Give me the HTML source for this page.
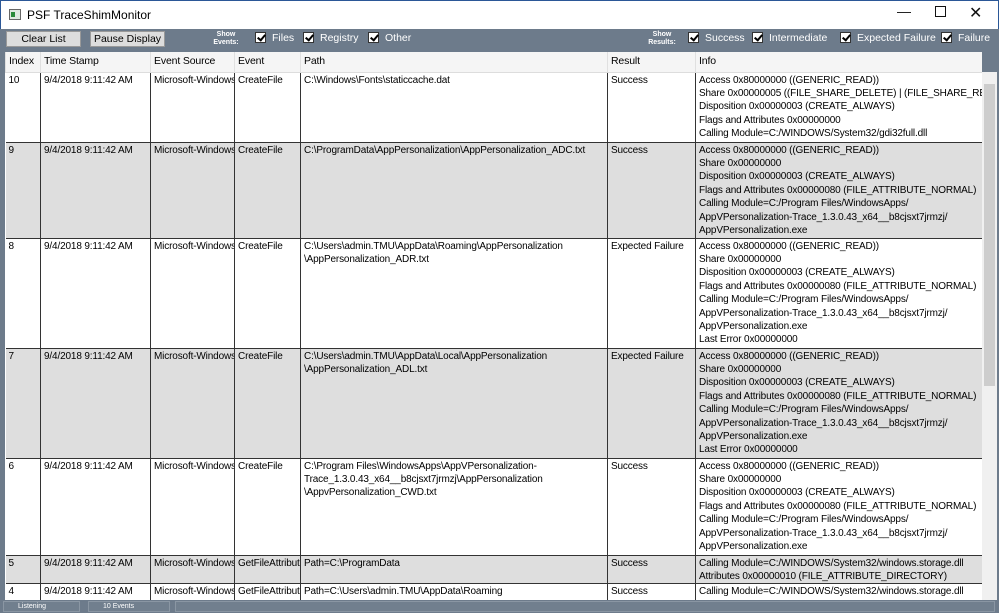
<!DOCTYPE html>
<html><head><meta charset="utf-8"><style>
*{margin:0;padding:0;box-sizing:border-box}
body{width:999px;height:613px;overflow:hidden;background:#6d7b8b;font-family:"Liberation Sans",sans-serif;font-size:10px;color:#000;position:relative}
#title{position:absolute;left:0;top:0;width:999px;height:29px;background:#fff;border:1px solid #2b5797;border-bottom:none}
#title .t{position:absolute;left:26px;top:7px;font-size:12px}
#title .ic{position:absolute;left:8px;top:8px;width:12px;height:11px;border:1px solid #666;background:#dfe8e0}
#title .ic:after{content:"";position:absolute;left:1px;top:2px;width:4px;height:5px;background:#2a8a3a}
.wb{position:absolute;top:4px;font-size:14px;color:#111}
.btn{position:absolute;top:31px;height:16px;background:#ddd;border:1px solid #999;font-size:10.5px;text-align:center;line-height:14px}
.lbl{position:absolute;top:31px;color:#fff;font-size:7px;font-weight:bold;line-height:8px;text-align:center;width:30px}
.cb{position:absolute;top:32px;color:#fff;font-size:10.5px;line-height:13px;white-space:nowrap}
.cb i{display:inline-block;width:11px;height:11px;background:#fff;border:1px solid #333;vertical-align:-2px;margin-right:6px;position:relative}
.cb i:after{content:"";position:absolute;left:3px;top:0px;width:3px;height:6px;border:solid #000;border-width:0 2px 2px 0;transform:rotate(40deg)}
#grid{position:absolute;left:5px;top:52px;width:977px;height:548px;background:#fff;overflow:hidden}
table{border-collapse:collapse;table-layout:fixed;width:977px}
td{vertical-align:top;padding:1px 2px 0 3px;line-height:13.4px;white-space:nowrap;overflow:hidden;border-left:1px solid #333;border-bottom:1px solid #333;letter-spacing:-0.15px}
tr.h td{height:20px;background:#f5f5f5;border-left:1px solid #e0e0e0;border-bottom:1px solid #ddd;padding-top:3px;font-size:10.5px}
td:first-child{border-left:none}
tr.g td{background:#dedede}
#sb{position:absolute;left:982px;top:72px;width:15px;height:528px;background:#f0f0f0}
#thumb{position:absolute;left:984px;top:84px;width:11px;height:302px;background:#cdcdcd}
#status{position:absolute;left:0;top:600px;width:999px;height:13px;background:#6d7b8b}
.st{position:absolute;top:601px;height:11px;border:1px solid #8a96a3;color:#fff;font-size:7px;line-height:9px;padding-left:14px;background:#717f8e}
</style></head><body>
<div id="title"><div class="ic"></div><div class="t">PSF TraceShimMonitor</div>
<div class="wb" style="left:896px;top:2px">—</div><div class="wb" style="left:934px;top:5px;width:11px;height:11px;border:1px solid #111"></div><div class="wb" style="left:968px;top:2px;font-size:16px">✕</div></div>
<div class="btn" style="left:6px;width:75px">Clear List</div>
<div class="btn" style="left:90px;width:75px">Pause Display</div>
<div class="lbl" style="left:211px">Show<br>Events:</div>
<div class="cb" style="left:255px"><i></i>Files</div>
<div class="cb" style="left:303px"><i></i>Registry</div>
<div class="cb" style="left:368px"><i></i>Other</div>
<div class="lbl" style="left:647px">Show<br>Results:</div>
<div class="cb" style="left:688px"><i></i>Success</div>
<div class="cb" style="left:752px"><i></i>Intermediate</div>
<div class="cb" style="left:840px"><i></i>Expected Failure</div>
<div class="cb" style="left:941px"><i></i>Failure</div>
<div id="grid"><table>
<colgroup><col style="width:35px"><col style="width:110px"><col style="width:84px"><col style="width:66px"><col style="width:307px"><col style="width:88px"><col style="width:287px"></colgroup>
<tr class="h"><td>Index</td><td>Time Stamp</td><td>Event Source</td><td>Event</td><td>Path</td><td>Result</td><td>Info</td></tr>
<tr style="height:70px"><td>10</td><td>9/4/2018 9:11:42 AM</td><td>Microsoft-Windows</td><td>CreateFile</td><td>C:\Windows\Fonts\staticcache.dat</td><td>Success</td><td>Access 0x80000000 ((GENERIC_READ))<br>Share 0x00000005 ((FILE_SHARE_DELETE) | (FILE_SHARE_READ))<br>Disposition 0x00000003 (CREATE_ALWAYS)<br>Flags and Attributes 0x00000000<br>Calling Module=C:/WINDOWS/System32/gdi32full.dll</td></tr>
<tr class="g" style="height:96px"><td>9</td><td>9/4/2018 9:11:42 AM</td><td>Microsoft-Windows</td><td>CreateFile</td><td>C:\ProgramData\AppPersonalization\AppPersonalization_ADC.txt</td><td>Success</td><td>Access 0x80000000 ((GENERIC_READ))<br>Share 0x00000000<br>Disposition 0x00000003 (CREATE_ALWAYS)<br>Flags and Attributes 0x00000080 (FILE_ATTRIBUTE_NORMAL)<br>Calling Module=C:/Program Files/WindowsApps/<br>AppVPersonalization-Trace_1.3.0.43_x64__b8cjsxt7jrmzj/<br>AppVPersonalization.exe</td></tr>
<tr style="height:110px"><td>8</td><td>9/4/2018 9:11:42 AM</td><td>Microsoft-Windows</td><td>CreateFile</td><td>C:\Users\admin.TMU\AppData\Roaming\AppPersonalization<br>\AppPersonalization_ADR.txt</td><td>Expected Failure</td><td>Access 0x80000000 ((GENERIC_READ))<br>Share 0x00000000<br>Disposition 0x00000003 (CREATE_ALWAYS)<br>Flags and Attributes 0x00000080 (FILE_ATTRIBUTE_NORMAL)<br>Calling Module=C:/Program Files/WindowsApps/<br>AppVPersonalization-Trace_1.3.0.43_x64__b8cjsxt7jrmzj/<br>AppVPersonalization.exe<br>Last Error 0x00000000</td></tr>
<tr class="g" style="height:110px"><td>7</td><td>9/4/2018 9:11:42 AM</td><td>Microsoft-Windows</td><td>CreateFile</td><td>C:\Users\admin.TMU\AppData\Local\AppPersonalization<br>\AppPersonalization_ADL.txt</td><td>Expected Failure</td><td>Access 0x80000000 ((GENERIC_READ))<br>Share 0x00000000<br>Disposition 0x00000003 (CREATE_ALWAYS)<br>Flags and Attributes 0x00000080 (FILE_ATTRIBUTE_NORMAL)<br>Calling Module=C:/Program Files/WindowsApps/<br>AppVPersonalization-Trace_1.3.0.43_x64__b8cjsxt7jrmzj/<br>AppVPersonalization.exe<br>Last Error 0x00000000</td></tr>
<tr style="height:97px"><td>6</td><td>9/4/2018 9:11:42 AM</td><td>Microsoft-Windows</td><td>CreateFile</td><td>C:\Program Files\WindowsApps\AppVPersonalization-<br>Trace_1.3.0.43_x64__b8cjsxt7jrmzj\AppPersonalization<br>\AppvPersonalization_CWD.txt</td><td>Success</td><td>Access 0x80000000 ((GENERIC_READ))<br>Share 0x00000000<br>Disposition 0x00000003 (CREATE_ALWAYS)<br>Flags and Attributes 0x00000080 (FILE_ATTRIBUTE_NORMAL)<br>Calling Module=C:/Program Files/WindowsApps/<br>AppVPersonalization-Trace_1.3.0.43_x64__b8cjsxt7jrmzj/<br>AppVPersonalization.exe</td></tr>
<tr class="g" style="height:28px"><td>5</td><td>9/4/2018 9:11:42 AM</td><td>Microsoft-Windows</td><td>GetFileAttributes</td><td>Path=C:\ProgramData</td><td>Success</td><td>Calling Module=C:/WINDOWS/System32/windows.storage.dll<br>Attributes 0x00000010 (FILE_ATTRIBUTE_DIRECTORY)</td></tr>
<tr style="height:28px"><td>4</td><td>9/4/2018 9:11:42 AM</td><td>Microsoft-Windows</td><td>GetFileAttributes</td><td>Path=C:\Users\admin.TMU\AppData\Roaming</td><td>Success</td><td>Calling Module=C:/WINDOWS/System32/windows.storage.dll</td></tr>
</table></div>
<div id="sb"></div><div id="thumb"></div>
<div id="status"></div>
<div class="st" style="left:3px;width:77px">Listening</div>
<div class="st" style="left:88px;width:82px">10 Events</div>
<div class="st" style="left:175px;width:820px"></div>
</body></html>
